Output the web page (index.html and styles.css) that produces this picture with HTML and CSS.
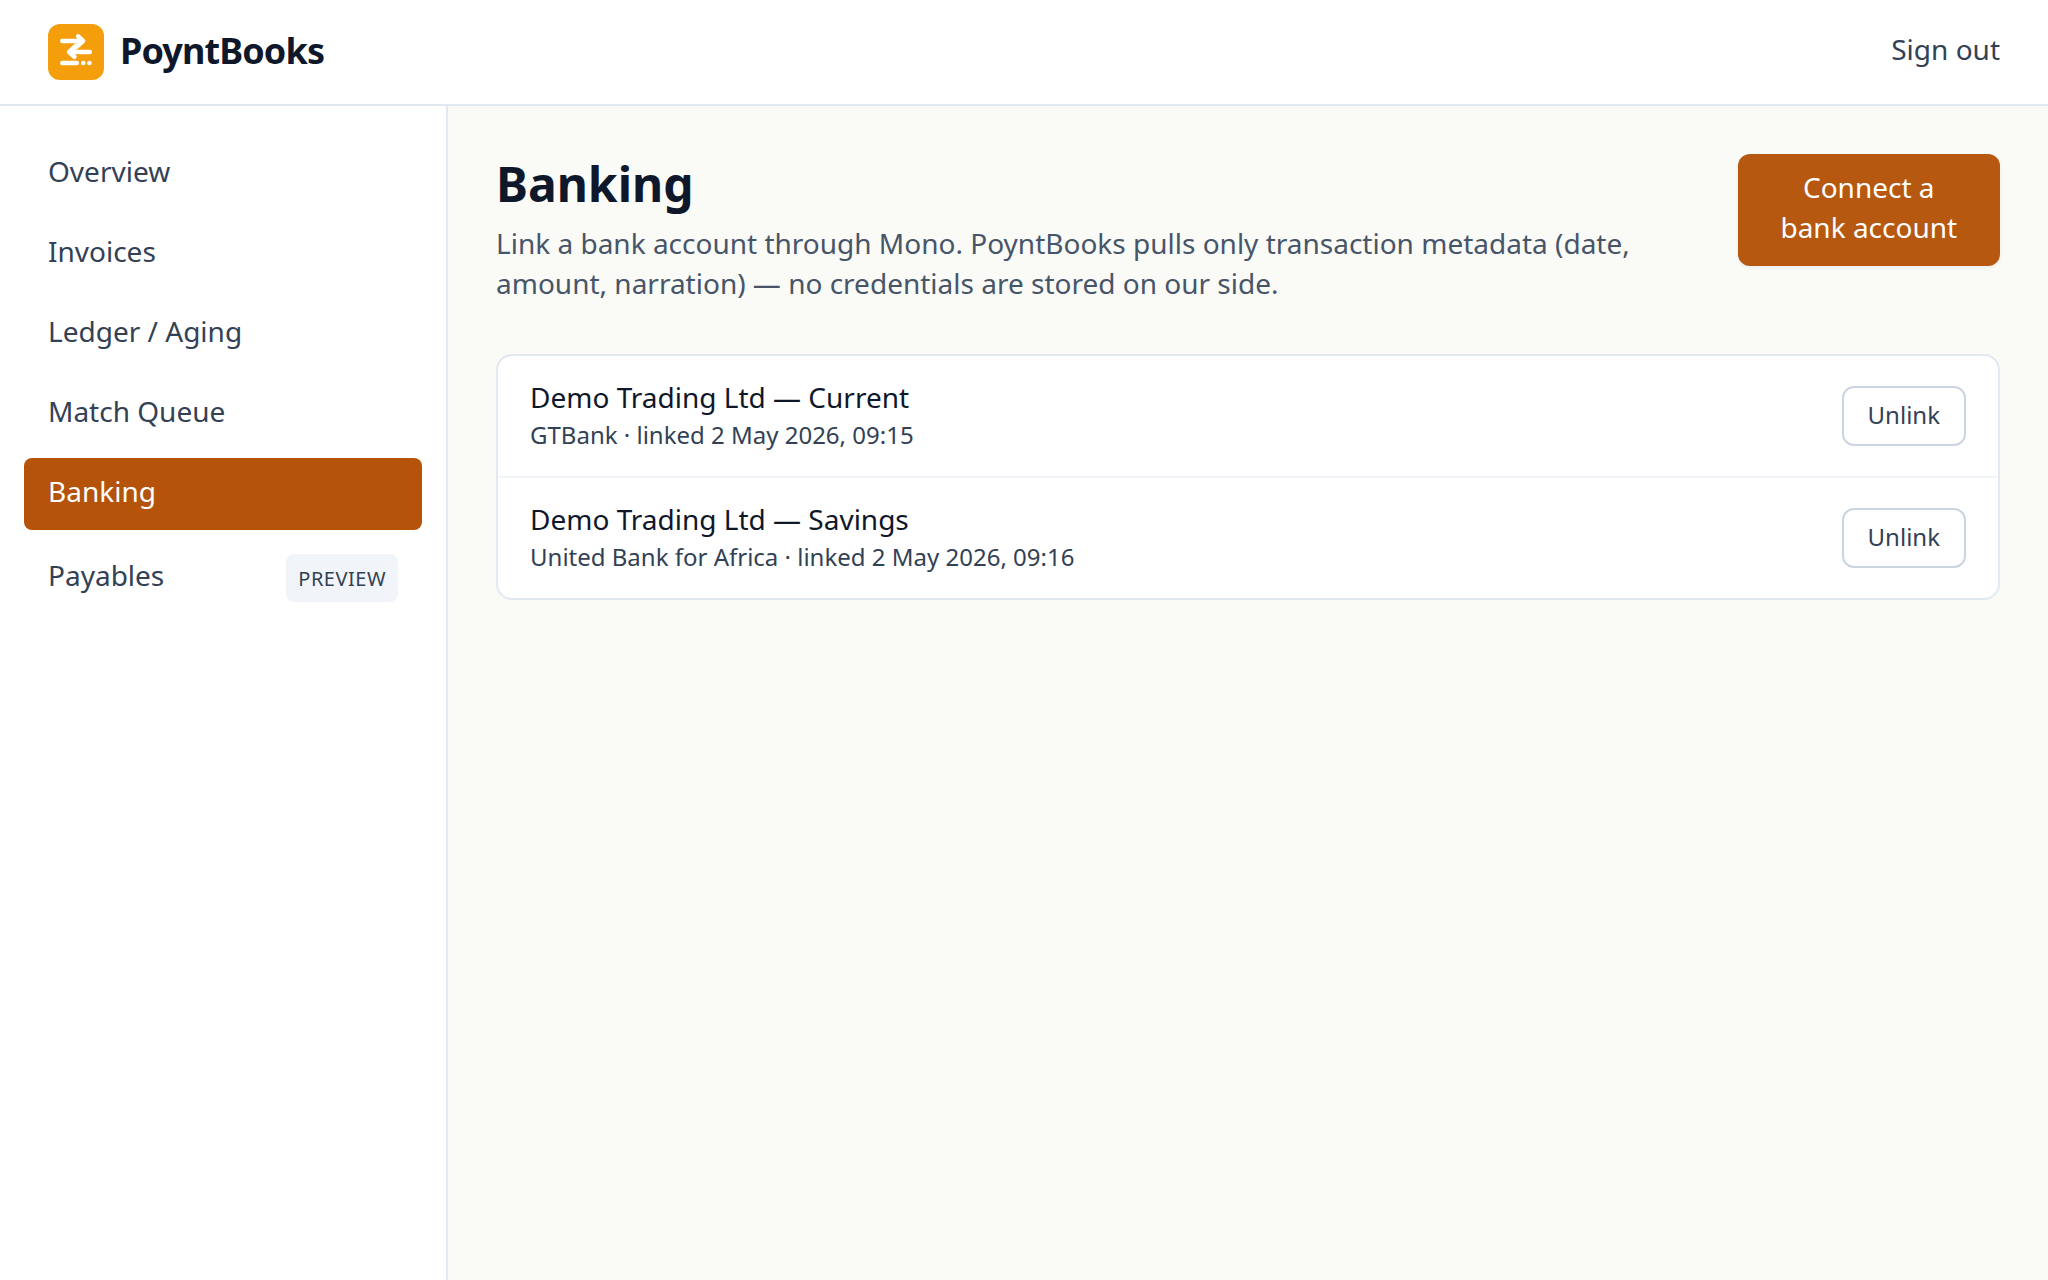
FILE: index.html
```html
<!DOCTYPE html>
<html lang="en">
<head>
  <meta charset="utf-8">
  <meta name="viewport" content="width=device-width, initial-scale=1">
  <title>Banking – PoyntBooks</title>
  <link rel="stylesheet" href="styles.css">
</head>
<body>
  <header class="topbar">
    <a class="brand" href="#">
      <svg class="brand-mark" viewBox="0 0 56 56" aria-hidden="true">
        <rect width="56" height="56" rx="12" fill="#f59e0b"/>
        <g fill="none" stroke="#fff" stroke-width="4.6" stroke-linecap="round" stroke-linejoin="round">
          <path d="M14.3 17H34"/>
          <path d="M30.2 12.4L35 17L28 23.4"/>
          <path d="M41.8 28H22"/>
          <path d="M28 21.6L21.2 28L26.4 32.8"/>
          <path d="M14.3 39H28.8"/>
        </g>
        <circle cx="35.3" cy="39" r="2.3" fill="#fff"/>
        <circle cx="41.4" cy="39" r="2.3" fill="#fff"/>
      </svg>
      <span class="brand-name">PoyntBooks</span>
    </a>
    <button class="sign-out" type="button">Sign out</button>
  </header>
  <div class="shell">
    <nav class="sidebar" aria-label="Main">
      <a class="nav-item" href="#"><span class="nav-label">Overview</span></a>
      <a class="nav-item" href="#"><span class="nav-label">Invoices</span></a>
      <a class="nav-item" href="#"><span class="nav-label">Ledger / Aging</span></a>
      <a class="nav-item" href="#"><span class="nav-label">Match Queue</span></a>
      <a class="nav-item nav-item-active" href="#" aria-current="page"><span class="nav-label">Banking</span></a>
      <a class="nav-item" href="#"><span class="nav-label">Payables</span> <span class="badge">Preview</span></a>
    </nav>
    <main class="content">
      <div class="page-head">
        <div>
          <h1 class="page-title">Banking</h1>
          <p class="page-intro">Link a bank account through Mono. PoyntBooks pulls only transaction metadata (date, amount, narration) — no credentials are stored on our side.</p>
        </div>
        <button class="connect" type="button">Connect a bank account</button>
      </div>
      <ul class="accounts">
        <li class="account">
          <div>
            <p class="account-name">Demo Trading Ltd — Current</p>
            <p class="account-meta">GTBank · linked 2 May 2026, 09:15</p>
          </div>
          <button class="unlink" type="button">Unlink</button>
        </li>
        <li class="account">
          <div>
            <p class="account-name">Demo Trading Ltd — Savings</p>
            <p class="account-meta">United Bank for Africa · linked 2 May 2026, 09:16</p>
          </div>
          <button class="unlink" type="button">Unlink</button>
        </li>
      </ul>
    </main>
  </div>
</body>
</html>
```
FILE: styles.css
```css
*,
*::before,
*::after {
  box-sizing: border-box;
}

body {
  margin: 0;
  min-height: 100vh;
  display: flex;
  flex-direction: column;
  background: #fafaf7;
  color: #0f172a;
  font-family: "Noto Sans", sans-serif;
  font-size: 28px;
  line-height: 40px;
}

h1,
p,
ul {
  margin: 0;
  padding: 0;
}

a {
  color: inherit;
  text-decoration: none;
}

button {
  margin: 0;
  font: inherit;
  cursor: pointer;
}

.topbar {
  display: flex;
  align-items: center;
  justify-content: space-between;
  padding: 24px 48px;
  background: #fff;
  border-bottom: 2px solid #e2e8f0;
}

.brand {
  display: flex;
  align-items: center;
  gap: 16px;
}

.brand-mark {
  display: block;
  width: 56px;
  height: 56px;
}

.brand-name {
  padding-bottom: 2px;
  font-size: 36px;
  line-height: 54px;
  font-weight: 700;
  letter-spacing: -0.025em;
}

/* Single lines of body text sit slightly high in a 40px row */
.sign-out,
.nav-label,
.account-name {
  padding: 0 0 6px;
  line-height: 34px;
}

.sign-out {
  border: 0;
  background: none;
  color: #334155;
}

.shell {
  flex: 1;
  display: flex;
}

.sidebar {
  flex: none;
  width: 448px;
  display: flex;
  flex-direction: column;
  gap: 8px;
  padding: 32px 24px;
  background: #fff;
  border-right: 2px solid #e2e8f0;
}

.nav-item {
  display: flex;
  align-items: center;
  justify-content: space-between;
  padding: 16px 24px;
  border-radius: 8px;
  color: #334155;
}

.nav-item-active {
  background: #b45309;
  color: #fff;
}

.badge {
  padding: 5px 12px 3px;
  border-radius: 8px;
  background: #f1f5f9;
  font-size: 20px;
  letter-spacing: 0.025em;
  text-transform: uppercase;
}

.content {
  flex: 1;
  min-width: 0;
  padding: 48px;
}

.page-head {
  display: flex;
  align-items: flex-start;
  justify-content: space-between;
  gap: 32px;
  margin-bottom: 48px;
}

.page-title {
  padding-bottom: 4px;
  font-size: 48px;
  line-height: 60px;
  font-weight: 700;
}

.page-intro {
  padding: 5px 0 3px;
  color: #475569;
}

.connect {
  padding: 13px 32px 19px;
  border: 0;
  border-radius: 12px;
  background: #b45309;
  color: #fff;
  box-shadow: 0 2px 4px rgba(15, 23, 42, 0.05);
  opacity: 0.97;
}

.accounts {
  list-style: none;
  background: #fff;
  border: 2px solid #e2e8f0;
  border-radius: 16px;
}

.account {
  display: flex;
  align-items: center;
  justify-content: space-between;
  gap: 32px;
  padding: 24px 32px;
}

.account + .account {
  border-top: 2px solid #f1f5f9;
}

.account-meta {
  padding-bottom: 2px;
  font-size: 24px;
  line-height: 30px;
  color: #334155;
}

.unlink {
  padding: 11px 24px 13px;
  border: 2px solid #cbd5e1;
  border-radius: 12px;
  background: #fff;
  color: #334155;
  font-size: 24px;
  line-height: 32px;
}
```
